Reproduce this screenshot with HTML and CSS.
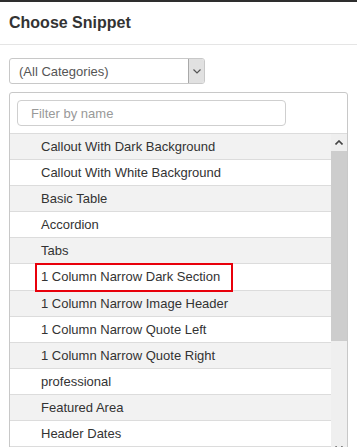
FILE: index.html
```html
<!DOCTYPE html>
<html lang="en">
<head>
    <meta charset="utf-8" />
    <link rel="stylesheet" href="styles.css">
    <title>Choose Snippet</title>
</head>
<body>
    <div class="topline"></div>
    <div class="header">
        <h1 class="title">Choose Snippet</h1>
    </div>
    <div class="content">
        <div class="selectbox">
            <span class="selecttext">(All Categories)</span>
            <span class="selectbut">
                <svg width="8" height="5" viewBox="0 0 8 5"><polyline points="0.5,0.5 4,4 7.5,0.5" fill="none" stroke="#555" stroke-width="1.2"/></svg>
            </span>
        </div>
        <div class="panel">
            <div class="filterrow">
                <input class="filterinput" type="text" placeholder="Filter by name" />
            </div>
            <div class="listwrap">
                <ul class="snippets">
                    <li>Callout With Dark Background</li>
                    <li>Callout With White Background</li>
                    <li>Basic Table</li>
                    <li>Accordion</li>
                    <li>Tabs</li>
                    <li><span class="marked">1 Column Narrow Dark Section</span></li>
                    <li>1 Column Narrow Image Header</li>
                    <li>1 Column Narrow Quote Left</li>
                    <li>1 Column Narrow Quote Right</li>
                    <li>professional</li>
                    <li>Featured Area</li>
                    <li>Header Dates</li>
                </ul>
                <div class="scrollbar">
                    <div class="scrollbut">
                        <svg width="8" height="5" viewBox="0 0 8 5"><polyline points="0.5,4.5 4,1 7.5,4.5" fill="none" stroke="#444" stroke-width="1.6"/></svg>
                    </div>
                    <div class="scrollthumb"></div>
                    <div class="scrolltrack"></div>
                    <div class="scrollbut">
                        <svg width="8" height="5" viewBox="0 0 8 5"><polyline points="0.5,0.5 4,4 7.5,0.5" fill="none" stroke="#444" stroke-width="1.6"/></svg>
                    </div>
                </div>
            </div>
        </div>
    </div>
</body>
</html>
```
FILE: styles.css
```css
body {
    margin: 0;
    font-family: "Liberation Sans", Arial, sans-serif;
    color: #333;
    background-color: #fff;
    overflow: hidden;
}
.topline {
    height: 2px;
    background-color: #2e2e2e;
}
.header {
    height: 42px;
    border-bottom: 1px solid #e5e5e5;
    display: flex;
    align-items: center;
}
.title {
    margin: 0 0 0 9px;
    font-size: 16px;
    font-weight: bold;
    color: #333;
}
.content {
    padding: 13px 9px 0 9px;
}
.selectbox {
    width: 196px;
    height: 26px;
    box-sizing: border-box;
    border: 1px solid #c8c8c8;
    border-radius: 3px;
    display: flex;
    align-items: center;
    justify-content: space-between;
}
.selecttext {
    font-size: 13px;
    color: #555;
    margin-left: 9px;
}
.selectbut {
    width: 15px;
    height: 24px;
    background-color: #e1e1e1;
    border-left: 1px solid #a9a9a9;
    border-radius: 0 2px 2px 0;
    display: flex;
    align-items: center;
    justify-content: center;
}
.panel {
    margin-top: 8px;
    border: 1px solid #c8c8c8;
    border-radius: 3px 3px 0 0;
}
.filterrow {
    padding: 7px;
    border-bottom: 1px solid #dcdcdc;
}
.filterinput {
    width: 269px;
    height: 26px;
    box-sizing: border-box;
    border: 1px solid #cfcfcf;
    border-radius: 4px;
    padding: 0 13px;
    font-family: "Liberation Sans", Arial, sans-serif;
    font-size: 13px;
    outline: none;
}
.filterinput::placeholder {
    color: #999;
}
.listwrap {
    display: flex;
    height: 323px;
    overflow: hidden;
}
.snippets {
    flex: 1;
    list-style: none;
    margin: 0;
    padding: 0;
}
.snippets li {
    line-height: 18.1px;
    padding: 4px 0 3px 31px;
    border-bottom: 1px solid #dcdcdc;
    font-size: 13px;
    color: #333;
}
.snippets li:nth-child(odd) {
    background-color: #f2f2f2;
}
.marked {
    display: inline-block;
    box-sizing: border-box;
    width: 194px;
    margin: -3px 0 -3px -4px;
    padding: 3px 0 3px 4px;
    outline: 2px solid #e8000b;
}
.scrollbar {
    width: 16px;
    background-color: #efefef;
    display: flex;
    flex-direction: column;
}
.scrollbut {
    height: 17px;
    display: flex;
    align-items: center;
    justify-content: center;
    flex: none;
}
.scrollthumb {
    height: 190px;
    background-color: #cdcdcd;
    flex: none;
}
.scrolltrack {
    flex: 1;
}
```
